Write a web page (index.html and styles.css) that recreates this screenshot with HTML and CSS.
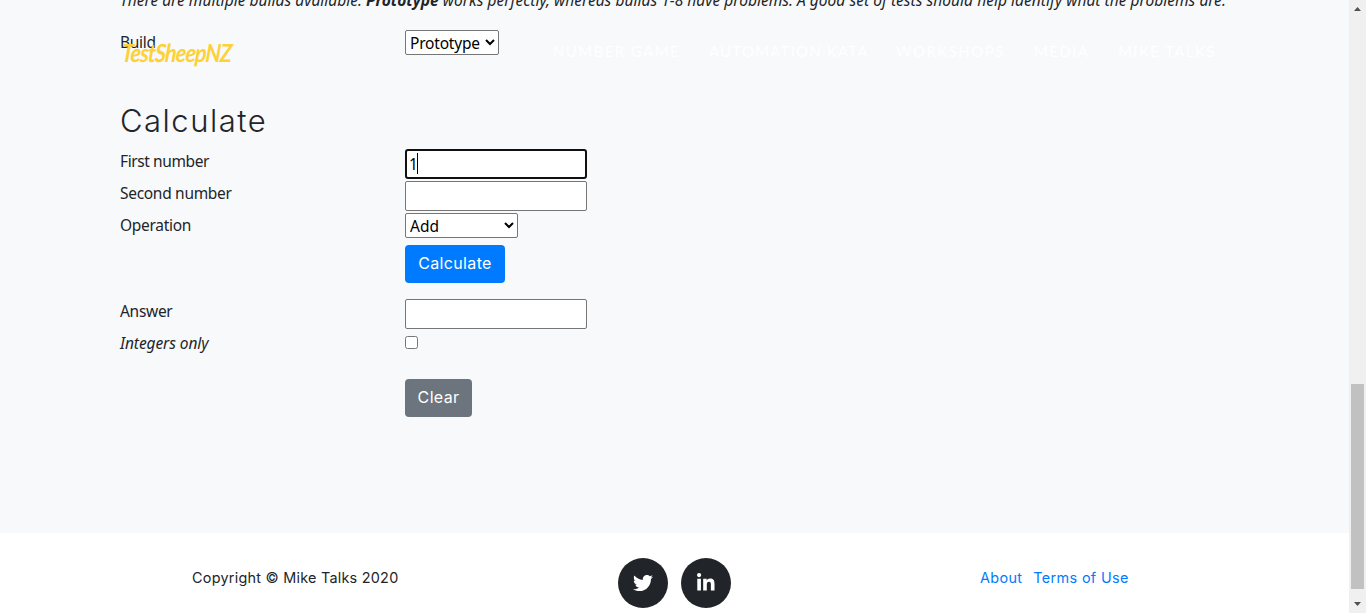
FILE: index.html
```html
<!DOCTYPE html>
<html lang="en">
<head>
<meta charset="utf-8">
<title>TestSheepNZ</title>
<link rel="stylesheet" href="styles.css">
</head>
<body>
<nav class="navbar">
  <a class="brand">TestSheepNZ</a>
  <div class="menu">
    <a class="nav-game">NUMBER GAME</a>
    <a class="nav-kata">AUTOMATION KATA</a>
    <a class="nav-work">WORKSHOPS</a>
    <a class="nav-media">MEDIA</a>
    <a class="nav-mike">MIKE TALKS</a>
  </div>
</nav>
<div class="page">
  <main class="section">
    <p class="intro">There are multiple builds available. <b>Prototype</b> works perfectly, whereas builds 1-8 have problems. A good set of tests should help identify what the problems are.</p>
    <div class="row build"><label>Build</label><select class="select-build"><option>Prototype</option></select></div>
    <h2>Calculate</h2>
    <div class="row"><label class="l-first">First number</label><div class="field"><input class="focused" type="text" value="1"><span class="caret"></span></div></div>
    <div class="row"><label>Second number</label><input type="text"></div>
    <div class="row"><label>Operation</label><select class="select-op"><option>Add</option></select></div>
    <div class="row action"><span></span><button class="btn primary">Calculate</button></div>
    <div class="row"><label>Answer</label><input type="text"></div>
    <div class="row"><label class="l-int">Integers only</label><input class="check" type="checkbox"></div>
    <div class="row clear"><span></span><button class="btn secondary">Clear</button></div>
  </main>
  <footer class="footer">
    <div class="copyright">Copyright © Mike Talks 2020</div>
    <div class="social">
      <a class="circle"><svg width="20" height="20" viewBox="0 0 512 512"><path d="M459.4 151.7c.3 4.5.3 9.1.3 13.6 0 138.7-105.6 298.6-298.6 298.6-59.5 0-114.7-17.2-161.1-47.1 8.4 1 16.6 1.3 25.3 1.3 49.1 0 94.2-16.6 130.3-44.8-46.1-1-84.8-31.2-98.1-72.8 6.5 1 13 1.6 19.8 1.6 9.4 0 18.8-1.3 27.6-3.6-48.1-9.7-84.1-52-84.1-103v-1.3c14 7.8 30.2 12.7 47.4 13.3-28.3-18.8-46.8-51-46.8-87.4 0-19.5 5.2-37.4 14.3-53 51.7 63.7 129.3 105.3 216.4 109.8-1.6-7.8-2.6-15.9-2.6-24 0-57.8 46.8-104.9 104.9-104.9 30.2 0 57.5 12.7 76.7 33.1 23.7-4.5 46.5-13.3 66.6-25.3-7.8 24.4-24.4 44.8-46.1 57.8 21.1-2.3 41.6-8.1 60.4-16.2-14.3 20.8-32.2 39.3-52.6 54.3z"/></svg></a>
      <a class="circle"><svg width="17.5" height="20" viewBox="0 0 448 512"><path d="M100.3 448H7.4V148.9h92.9zM53.8 108.1C24.1 108.1 0 83.5 0 53.8a53.8 53.8 0 0 1 107.6 0c0 29.7-24.1 54.3-53.8 54.3zM447.9 448h-92.7V302.4c0-34.7-.7-79.2-48.3-79.2-48.3 0-55.7 37.7-55.7 76.7V448h-92.8V148.9h89.1v40.8h1.3c12.4-23.5 42.7-48.3 87.9-48.3 94 0 111.3 61.9 111.3 142.3V448z"/></svg></a>
    </div>
    <div class="links"><a>About</a><a>Terms of Use</a></div>
  </footer>
</div>
<aside class="scrollbar">
  <svg class="arrow" width="7" height="4" viewBox="0 0 7 4"><path d="M0 4h7L3.5 0z"/></svg>
  <span class="thumb"></span>
  <svg class="arrow" width="7" height="4" viewBox="0 0 7 4"><path d="M0 0h7L3.5 4z"/></svg>
</aside>
</body>
</html>
```
FILE: styles.css
```css
* { box-sizing: border-box; }
body {
  margin: 0;
  height: 613px;
  overflow: hidden;
  display: grid;
  grid-template-columns: 1349px 17px;
  font: 15.5px/24px "Noto Sans", sans-serif;
  color: #212529;
  background: #fff;
}
.page { height: 613px; overflow: hidden; }
.section { height: 533px; padding-left: 120px; background: #f8f9fb; overflow: hidden; }
.intro { margin: -12px 0 18px; font-style: italic; white-space: nowrap; letter-spacing: 0.029px; }
.row { display: grid; grid-template-columns: 285px 1fr; height: 32px; align-items: start; justify-items: start; }
.row.build { height: 25px; margin-bottom: 47px; }
label { letter-spacing: -0.3px; }
.l-first { letter-spacing: -0.4px; }
.l-int { font-style: italic; letter-spacing: -0.08px; }
h2 { margin: 0; height: 47px; font: 300 31px/38px Inter, sans-serif; letter-spacing: 1.5px; }
input, select { margin: 0; font: 15.5px/24px "Noto Sans", sans-serif; color: #000; }
input[type="text"] {
  width: 182px;
  height: 30px;
  padding: 1px 3px;
  border: 1px solid #767676;
  border-radius: 2px;
  background: #fff;
  outline: none;
}
input[type="text"].focused { border: 2px solid #101010; border-radius: 3px; padding: 0 2px; }
.field { position: relative; height: 30px; }
.caret { position: absolute; left: 12px; top: 4px; width: 1px; height: 21px; background: #000; }
select { height: 25px; border: 1px solid #767676; border-radius: 2px; background: #fff; padding: 0; }
.select-build { width: 94px; letter-spacing: -0.2px; }
.select-op { width: 113px; }
.check { width: 13px; height: 13px; margin-top: 5px; }
.btn {
  height: 38px;
  padding: 0 0 2px;
  border: 0;
  border-radius: 4px;
  color: #fff;
  font: 400 16px/36px Inter, sans-serif;
  letter-spacing: 0.35px;
  text-align: center;
}
.primary { width: 100px; background: #007bff; }
.secondary { width: 67px; background: #6c757d; }
.row.action { height: 54px; }
.row.clear { height: 38px; margin-top: 16px; }
.footer {
  height: 80px;
  padding-top: 25px;
  display: grid;
  grid-template-columns: 488px 374px 1fr;
  font: 400 14.4px/39px Inter, sans-serif;
  white-space: nowrap;
}
.copyright { padding-left: 192px; letter-spacing: 0.25px; }
.social { display: flex; gap: 13px; padding-left: 130px; }
.circle { width: 50px; height: 50px; border-radius: 50%; background: #212529; display: grid; place-items: center; }
.circle svg { fill: #fff; }
.links { display: flex; gap: 11px; padding-left: 118px; color: #007bff; letter-spacing: 0.35px; }
.navbar {
  position: absolute;
  left: 122px;
  top: 34px;
  width: 1104px;
  height: 36px;
  display: flex;
  justify-content: space-between;
  align-items: center;
  white-space: nowrap;
}
.brand {
  color: #fed136;
  font: italic 700 25px/36px Lato, sans-serif;
  letter-spacing: -1px;
  transform: scaleX(0.86) skewX(-5deg);
  transform-origin: left;
}
.menu { display: grid; grid-template-columns: 156px 187px 138px 84px 108px; margin-top: -2px; color: #fff; font: 400 15px/34px Lato, sans-serif; letter-spacing: 1.4px; }
.nav-kata { letter-spacing: 1.2px; }
.nav-work { letter-spacing: 1.5px; }
.scrollbar { height: 613px; background: #f0f0f0; display: flex; flex-direction: column; align-items: center; padding: 7px 0; }
.arrow { fill: #505050; flex: none; }
.thumb { width: 13px; height: 205px; margin: 373px 0 13px; background: #c1c1c1; flex: none; }
```
